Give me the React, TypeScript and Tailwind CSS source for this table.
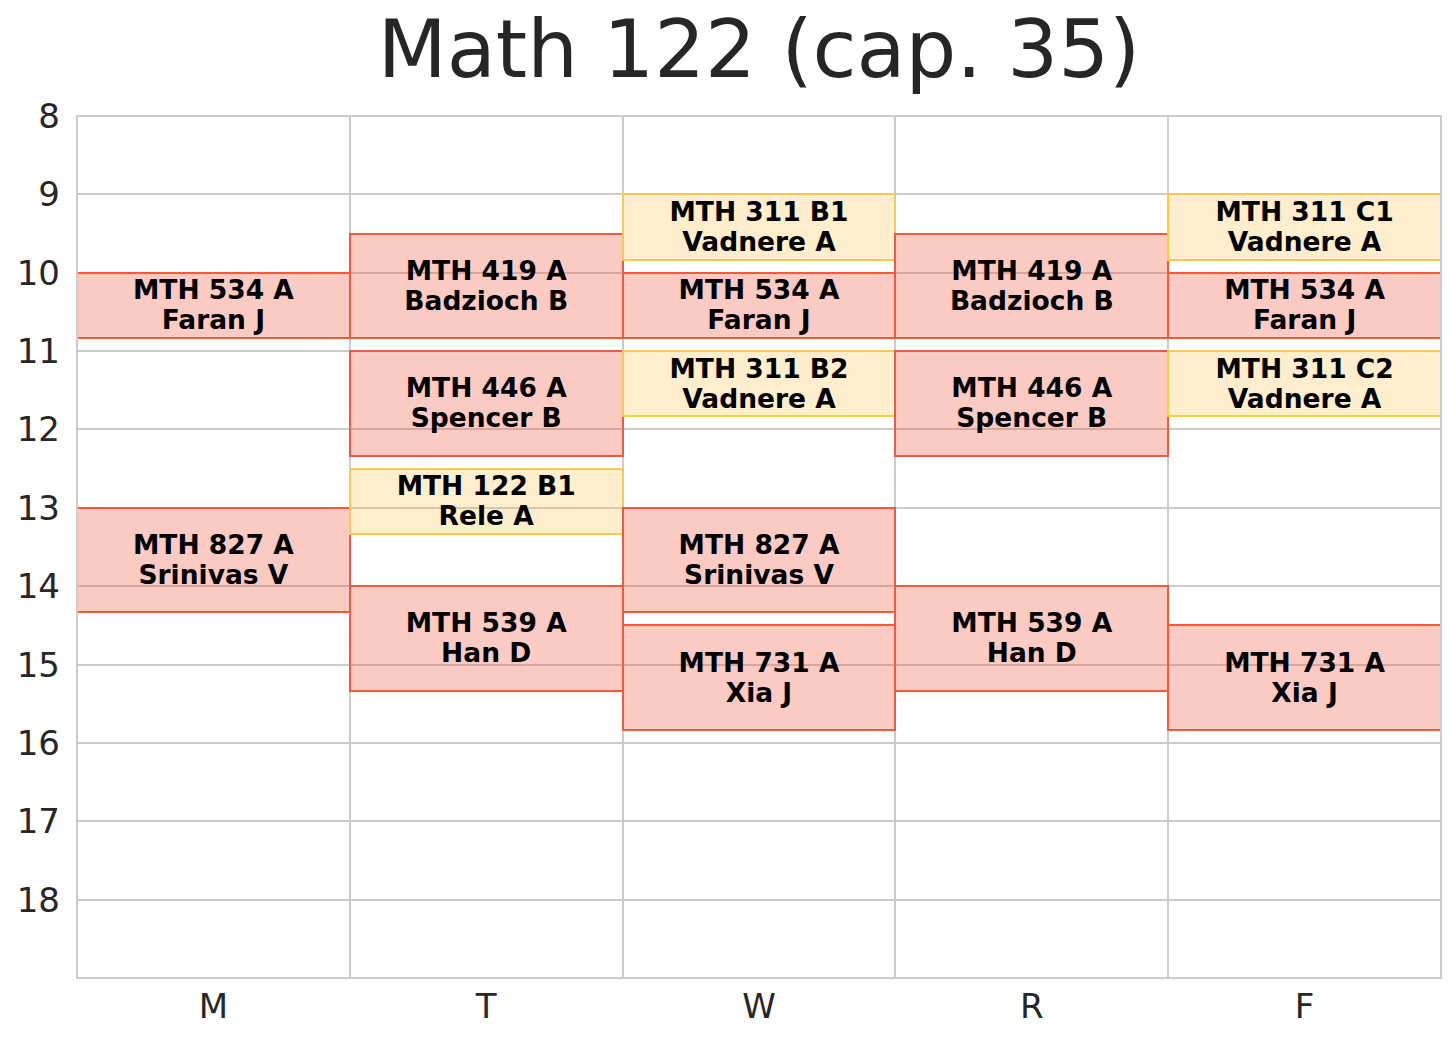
const HOUR_PX = 862 / 11
const COL_PX = 1364 / 5
const DAYS = ['M', 'T', 'W', 'R', 'F']
const HOURS = [8, 9, 10, 11, 12, 13, 14, 15, 16, 17, 18]

type Kind = 'lec' | 'lab'

interface Block {
  day: number
  start: number
  end: number
  course: string
  who: string
  kind: Kind
}

const BLOCKS: Block[] = [
  // M
  { day: 0, start: 10, end: 10 + 50 / 60, course: 'MTH 534 A', who: 'Faran J', kind: 'lec' },
  { day: 0, start: 13, end: 14 + 20 / 60, course: 'MTH 827 A', who: 'Srinivas V', kind: 'lec' },
  // T
  { day: 1, start: 9.5, end: 10 + 50 / 60, course: 'MTH 419 A', who: 'Badzioch B', kind: 'lec' },
  { day: 1, start: 11, end: 12 + 20 / 60, course: 'MTH 446 A', who: 'Spencer B', kind: 'lec' },
  { day: 1, start: 12.5, end: 13 + 20 / 60, course: 'MTH 122 B1', who: 'Rele A', kind: 'lab' },
  { day: 1, start: 14, end: 15 + 20 / 60, course: 'MTH 539 A', who: 'Han D', kind: 'lec' },
  // W
  { day: 2, start: 9, end: 9 + 50 / 60, course: 'MTH 311 B1', who: 'Vadnere A', kind: 'lab' },
  { day: 2, start: 10, end: 10 + 50 / 60, course: 'MTH 534 A', who: 'Faran J', kind: 'lec' },
  { day: 2, start: 11, end: 11 + 50 / 60, course: 'MTH 311 B2', who: 'Vadnere A', kind: 'lab' },
  { day: 2, start: 13, end: 14 + 20 / 60, course: 'MTH 827 A', who: 'Srinivas V', kind: 'lec' },
  { day: 2, start: 14.5, end: 15 + 50 / 60, course: 'MTH 731 A', who: 'Xia J', kind: 'lec' },
  // R
  { day: 3, start: 9.5, end: 10 + 50 / 60, course: 'MTH 419 A', who: 'Badzioch B', kind: 'lec' },
  { day: 3, start: 11, end: 12 + 20 / 60, course: 'MTH 446 A', who: 'Spencer B', kind: 'lec' },
  { day: 3, start: 14, end: 15 + 20 / 60, course: 'MTH 539 A', who: 'Han D', kind: 'lec' },
  // F
  { day: 4, start: 9, end: 9 + 50 / 60, course: 'MTH 311 C1', who: 'Vadnere A', kind: 'lab' },
  { day: 4, start: 10, end: 10 + 50 / 60, course: 'MTH 534 A', who: 'Faran J', kind: 'lec' },
  { day: 4, start: 11, end: 11 + 50 / 60, course: 'MTH 311 C2', who: 'Vadnere A', kind: 'lab' },
  { day: 4, start: 14.5, end: 15 + 50 / 60, course: 'MTH 731 A', who: 'Xia J', kind: 'lec' },
]

export default function App() {
  return (
    <div className="w-[1456px] h-[1040px] bg-white text-[#262626] font-['DejaVu_Sans',sans-serif]">
      {/* title */}
      <div className="h-[116px] pl-[77px] pr-[15px] pt-[10px]">
        <h1 className="text-center text-[80px] leading-[80px] font-normal">Math 122 (cap. 35)</h1>
      </div>

      <div className="flex">
        {/* y axis */}
        <div className="relative w-[77px] h-[862px]">
          {HOURS.map((h) => (
            <div
              key={h}
              className="absolute right-[17px] text-[34px] leading-[34px] -translate-y-1/2"
              style={{ top: (h - 8) * HOUR_PX }}
            >
              {h}
            </div>
          ))}
        </div>

        {/* plot area */}
        <div className="relative w-[1364px] h-[862px]">
          <div className="absolute inset-0 grid grid-cols-5 grid-rows-11">
            {Array.from({ length: 55 }).map((_, i) => (
              <div key={i} className="border-r-2 border-b-2 border-[#cccccc] -mr-[1px] -mb-[1px]" />
            ))}
          </div>

          {BLOCKS.map((b, i) => (
            <div
              key={i}
              className={`absolute box-border border-2 flex flex-col items-center justify-center text-center font-bold text-black text-[26.5px] leading-[30px] ${
                b.kind === 'lec'
                  ? 'bg-[rgba(240,80,55,0.3)] border-[#f25a3d]'
                  : 'bg-[rgba(252,190,60,0.26)] border-[#fdc84c]'
              }`}
              style={{
                left: b.day * COL_PX - 1,
                top: (b.start - 8) * HOUR_PX - 1,
                width: COL_PX + 2,
                height: (b.end - b.start) * HOUR_PX + 2,
              }}
            >
              <span>{b.course}</span>
              <span>{b.who}</span>
            </div>
          ))}

          <div className="absolute -inset-[1px] border-2 border-[#cccccc] pointer-events-none" />
        </div>
      </div>

      {/* x axis */}
      <div className="flex pl-[77px] pt-[11px]">
        {DAYS.map((d) => (
          <div key={d} className="w-[272.8px] text-center text-[34px] leading-[34px]">
            {d}
          </div>
        ))}
      </div>
    </div>
  )
}
